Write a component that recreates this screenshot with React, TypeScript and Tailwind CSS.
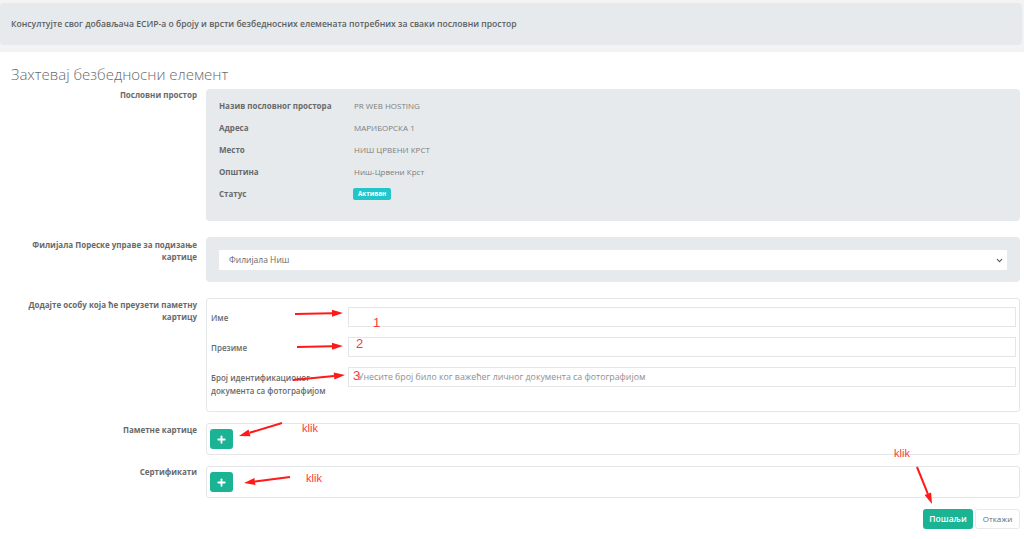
import { ChevronDown, Plus } from "lucide-react";

const info = [
    { label: "Назив пословног простора", value: "PR WEB HOSTING" },
    { label: "Адреса", value: "МАРИБОРСКА 1" },
    { label: "Место", value: "НИШ ЦРВЕНИ КРСТ" },
    { label: "Општина", value: "Ниш-Црвени Крст" },
];

function Label({ children }: { children: React.ReactNode }) {
    return (
        <div className="w-[206px] shrink-0 pr-[9px] text-right text-[8px] leading-[12px] font-bold text-[#676a6c]">
            {children}
        </div>
    );
}

function AddButton() {
    return (
        <button className="flex h-[20px] w-[23px] items-center justify-center rounded-[3px] bg-[#1ab394] text-white">
            <Plus size={11} strokeWidth={4} />
        </button>
    );
}

function Annotations() {
    const red = "#ff1a1a";
    const arrows = [
        [295, 314, 343, 313],
        [297, 347, 343, 346],
        [293, 380, 345, 375],
        [282, 423, 239, 436],
        [290, 477, 244, 483],
        [917, 467, 932, 504],
    ];
    return (
        <svg className="pointer-events-none absolute left-0 top-0" width="1024" height="539" viewBox="0 0 1024 539">
            {arrows.map(([x1, y1, x2, y2], i) => {
                const a = Math.atan2(y2 - y1, x2 - x1);
                const len = 11;
                const w = 3.5;
                const bx = x2 - Math.cos(a) * len;
                const by = y2 - Math.sin(a) * len;
                const px = -Math.sin(a) * w;
                const py = Math.cos(a) * w;
                return (
                    <g key={i}>
                        <line x1={x1} y1={y1} x2={bx} y2={by} stroke={red} strokeWidth="2" />
                        <polygon points={`${x2},${y2} ${bx + px},${by + py} ${bx - px},${by - py}`} fill={red} />
                    </g>
                );
            })}
            <g fill="#ff3838" fontFamily="'Liberation Sans', Arial, sans-serif">
                <text x="373" y="327" fontSize="13">1</text>
                <text x="356" y="348" fontSize="13">2</text>
                <text x="353" y="380" fontSize="13">3</text>
                <text x="302" y="432" fontSize="11">klik</text>
                <text x="306" y="482" fontSize="11">klik</text>
                <text x="894" y="457" fontSize="11">klik</text>
            </g>
        </svg>
    );
}

export default function App() {
    return (
        <div className="relative min-h-[539px] w-[1024px] bg-[#f3f3f4] pt-[3px] font-['Open_Sans',sans-serif] text-[#676a6c]">
            <div className="mr-[2px] flex h-[42px] items-center rounded-[4px] bg-[#e7eaec] pl-[11px] text-[8.6px] font-semibold text-[#5c5f61]">
                Консултујте свог добављача ЕСИР-а о броју и врсти безбедносних елемената потребних за сваки пословни простор
            </div>

            <div className="mt-[7px] bg-white pb-[10px] pr-[4px] pt-[10px]">
                <h2 className="pl-[11px] text-[15px] leading-[24px] font-light text-[#676a6c]">
                    Захтевај безбедносни елемент
                </h2>

                <div className="mt-[3px] flex flex-col">
                    <div className="flex">
                        <Label>Пословни простор</Label>
                        <div className="flex-1 rounded-[4px] bg-[#e7eaec] pb-[16px] pl-[13px] pt-[6px]">
                            {info.map((r) => (
                                <div key={r.label} className="flex h-[22px] items-center text-[8px]">
                                    <div className="w-[135px] font-bold text-[#676a6c]">{r.label}</div>
                                    <div className="text-[#7b7e80]">{r.value}</div>
                                </div>
                            ))}
                            <div className="flex h-[22px] items-center text-[8px]">
                                <div className="w-[134px] font-bold text-[#676a6c]">Статус</div>
                                <span className="flex h-[12px] items-center rounded-[2px] bg-[#23c6c8] px-[5px] text-[6.3px] font-bold text-white">
                                    Активан
                                </span>
                            </div>
                        </div>
                    </div>

                    <div className="mt-[16px] flex">
                        <Label>
                            <div className="pt-[2px]">
                                Филијала Пореске управе за подизање
                                <br />
                                картице
                            </div>
                        </Label>
                        <div className="flex-1 rounded-[4px] bg-[#e7eaec] px-[13px] pb-[12px] pt-[13px]">
                            <div className="relative">
                                <select className="block h-[20px] w-full appearance-none bg-white pl-[10px] text-[8.5px] text-[#676a6c] outline-none">
                                    <option>Филијала Ниш</option>
                                </select>
                                <ChevronDown className="pointer-events-none absolute right-[3px] top-[6px] text-[#555]" size={9} strokeWidth={3} />
                            </div>
                        </div>
                    </div>

                    <div className="mt-[16px] flex">
                        <Label>
                            <div className="pt-[1px]">
                                Додајте особу која ће преузети паметну
                                <br />
                                картицу
                            </div>
                        </Label>
                        <div className="flex flex-1 flex-col gap-[10px] rounded-[3px] border border-[#e5e6e7] pb-[14px] pl-[4px] pr-[3px] pt-[8px]">
                            <div className="flex items-start">
                                <div className="w-[137px] shrink-0 pt-[4px] text-[8px] leading-[13px] font-semibold">Име</div>
                                <input className="h-[20px] flex-1 border border-[#e5e6e7] px-[9px] text-[8.8px] outline-none" />
                            </div>
                            <div className="flex items-start">
                                <div className="w-[137px] shrink-0 pt-[4px] text-[8px] leading-[13px] font-semibold">Презиме</div>
                                <input className="h-[20px] flex-1 border border-[#e5e6e7] px-[9px] text-[8.8px] outline-none" />
                            </div>
                            <div className="flex h-[30px] items-start">
                                <div className="w-[137px] shrink-0 pt-[4px] text-[8px] leading-[13px] font-semibold">
                                    Број идентификационог
                                    <br />
                                    документа са фотографијом
                                </div>
                                <input
                                    placeholder="Унесите број било ког важећег личног документа са фотографијом"
                                    className="h-[20px] flex-1 border border-[#e5e6e7] px-[9px] text-[8.8px] outline-none placeholder:text-[#8e9092]"
                                />
                            </div>
                        </div>
                    </div>

                    <div className="mt-[11px] flex">
                        <Label>
                            <div className="pt-[1px]">Паметне картице</div>
                        </Label>
                        <div className="h-[32px] flex-1 rounded-[3px] border border-[#e5e6e7] pl-[3px] pt-[5px]">
                            <AddButton />
                        </div>
                    </div>

                    <div className="mt-[11px] flex">
                        <Label>
                            <div>Сертификати</div>
                        </Label>
                        <div className="h-[32px] flex-1 rounded-[3px] border border-[#e5e6e7] pl-[3px] pt-[5px]">
                            <AddButton />
                        </div>
                    </div>

                    <div className="mt-[11px] flex justify-end gap-[2px]">
                        <button className="h-[20px] w-[50px] rounded-[3px] bg-[#1ab394] text-[8.5px] font-semibold text-white">
                            Пошаљи
                        </button>
                        <button className="h-[20px] w-[45px] rounded-[3px] border border-[#e7eaec] bg-white text-[8px] text-[#676a6c]">
                            Откажи
                        </button>
                    </div>
                </div>
            </div>

            <Annotations />
        </div>
    );
}
